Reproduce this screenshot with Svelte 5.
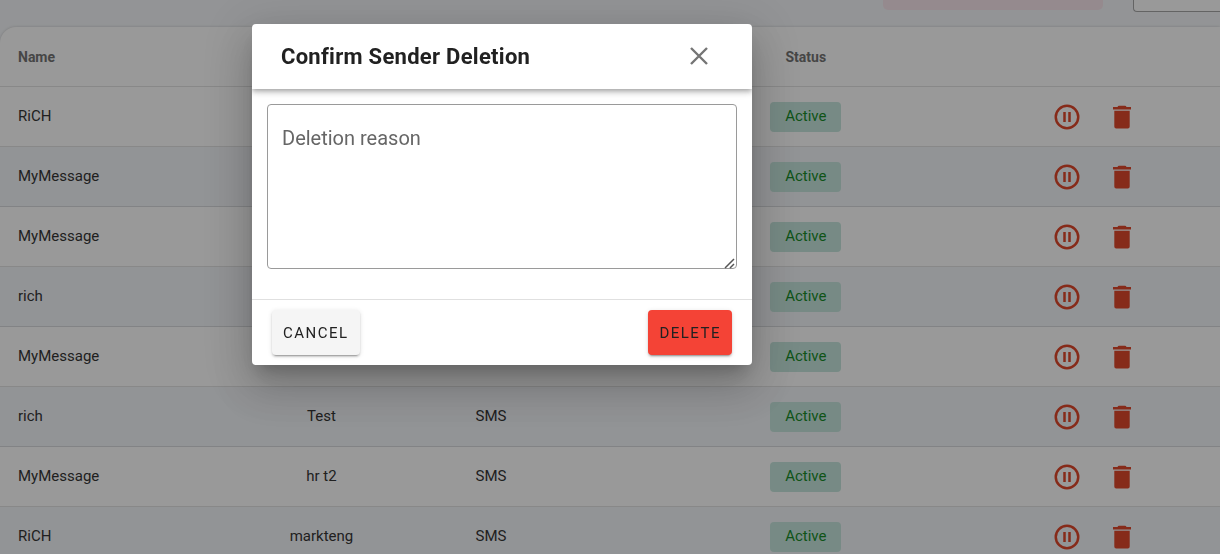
<script lang="ts">
  type Sender = { name: string; customer?: string; type?: string; status: string };

  let senders: Sender[] = [
    { name: 'RiCH', status: 'Active' },
    { name: 'MyMessage', status: 'Active' },
    { name: 'MyMessage', status: 'Active' },
    { name: 'rich', status: 'Active' },
    { name: 'MyMessage', status: 'Active' },
    { name: 'rich', customer: 'Test', type: 'SMS', status: 'Active' },
    { name: 'MyMessage', customer: 'hr t2', type: 'SMS', status: 'Active' },
    { name: 'RiCH', customer: 'markteng', type: 'SMS', status: 'Active' },
  ];

  let dialogOpen = true;
  let reason = '';

  function closeDialog() {
    dialogOpen = false;
    reason = '';
  }
</script>

<div class="page">
  <!-- Toolbar -->
  <div class="toolbar">
    <div class="notice"></div>
    <div class="filter"></div>
  </div>

  <!-- Senders table -->
  <div class="card">
    <table>
      <colgroup>
        <col class="col-name" />
        <col class="col-text" />
        <col class="col-text" />
        <col class="col-gap" />
        <col class="col-status" />
        <col class="col-actions" />
      </colgroup>
      <thead>
        <tr>
          <th class="name">Name</th>
          <th></th>
          <th></th>
          <th></th>
          <th>Status</th>
          <th></th>
        </tr>
      </thead>
      <tbody>
        {#each senders as sender}
          <tr>
            <td class="name text">{sender.name}</td>
            <td class="text">{sender.customer ?? ''}</td>
            <td class="text">{sender.type ?? ''}</td>
            <td></td>
            <td><span class="badge">{sender.status}</span></td>
            <td>
              <div class="actions">
                <button class="icon-button" aria-label="Pause sender">
                  <svg viewBox="0 0 24 24" width="30" height="30">
                    <path d="M13 16V8h2v8h-2m-4 0V8h2v8H9m3-14a10 10 0 0 1 10 10 10 10 0 0 1-10 10A10 10 0 0 1 2 12 10 10 0 0 1 12 2m0 2a8 8 0 0 0-8 8 8 8 0 0 0 8 8 8 8 0 0 0 8-8 8 8 0 0 0-8-8z" />
                  </svg>
                </button>
                <button class="icon-button" aria-label="Delete sender" on:click={() => (dialogOpen = true)}>
                  <svg viewBox="0 0 30 30" width="30" height="30">
                    <path d="M6 5h4.500q.5-1.300 1.500-1.300h6q1 0 1.500 1.300H24v2.500H6zM7.300 8.800h15.400v15.800q0 1.900-1.900 1.900H9.200q-1.900 0-1.900-1.900z" />
                  </svg>
                </button>
              </div>
            </td>
          </tr>
        {/each}
      </tbody>
    </table>
  </div>
</div>

{#if dialogOpen}
  <div class="overlay">
    <div class="dialog" role="dialog" aria-modal="true" aria-labelledby="dialog-title">
      <header>
        <h2 id="dialog-title">Confirm Sender Deletion</h2>
        <button class="icon-button close" aria-label="Close" on:click={closeDialog}>
          <svg viewBox="0 0 30 30" width="30" height="30">
            <path d="M7 6l16 16M23 6L7 22" />
          </svg>
        </button>
      </header>

      <div class="content">
        <div class="field">
          <textarea bind:value={reason} placeholder="Deletion reason" aria-label="Deletion reason"></textarea>
          <svg class="grip" viewBox="0 0 12 12" width="12" height="12" aria-hidden="true">
            <path d="M1 11L10 2M6 11L10 7" />
          </svg>
        </div>
      </div>

      <footer>
        <button class="btn cancel" on:click={closeDialog}>CANCEL</button>
        <button class="btn delete" on:click={closeDialog}>DELETE</button>
      </footer>
    </div>
  </div>
{/if}

<style>
  :global(body) {
    margin: 0;
    font-family: Roboto, 'Liberation Sans', sans-serif;
    color: #212121;
  }

  .page {
    height: 100vh;
    overflow: hidden;
    background: #f4f6f9;
  }

  /* Toolbar */
  .toolbar {
    display: flex;
    justify-content: flex-end;
    align-items: flex-start;
    gap: 30px;
    height: 27px;
  }

  .notice {
    width: 220px;
    height: 10px;
    border-radius: 0 0 5px 5px;
    background: #f8e4ea;
  }

  .filter {
    box-sizing: border-box;
    width: 87px;
    height: 12px;
    border: 1px solid #9e9e9e;
    border-width: 0 0 1px 1px;
    border-bottom-left-radius: 4px;
    background: #fff;
  }

  /* Table */
  .card {
    border-top-left-radius: 16px;
    background: #fff;
    box-shadow: 0 0 3px rgba(0, 0, 0, 0.2);
    overflow: hidden;
  }

  table {
    width: 100%;
    table-layout: fixed;
    border-collapse: separate;
    border-spacing: 0;
  }

  .col-name {
    width: 19.4%;
  }

  .col-text {
    width: 13.9%;
  }

  .col-gap {
    width: 5.5%;
  }

  .col-status {
    width: 26.7%;
  }

  .col-actions {
    width: 20.6%;
  }

  th,
  td {
    box-sizing: border-box;
    height: 60px;
    padding: 0;
    border-bottom: 1px solid rgba(0, 0, 0, 0.12);
    text-align: center;
  }

  th {
    color: #666;
    font-size: 14px;
    font-weight: 700;
  }

  td {
    font-size: 15px;
  }

  .text {
    padding-bottom: 2px;
  }

  .name {
    padding-left: 18px;
    text-align: left;
  }

  tbody tr:nth-child(even) {
    background: #f3f5f9;
  }

  .badge {
    display: inline-block;
    box-sizing: border-box;
    height: 30px;
    padding: 0 15px;
    border-radius: 4px;
    background: #c0e4da;
    color: #008010;
    line-height: 28px;
    vertical-align: middle;
  }

  .actions {
    display: flex;
    justify-content: center;
    gap: 25px;
  }

  .icon-button {
    display: flex;
    padding: 0;
    border: none;
    background: none;
    cursor: pointer;
  }

  .icon-button svg {
    fill: #dd3515;
  }

  /* Dialog */
  .overlay {
    position: fixed;
    inset: 0;
    box-sizing: border-box;
    padding: 24px 24px 24px 252px;
    background: rgba(33, 33, 33, 0.46);
  }

  .dialog {
    max-width: 500px;
    border-radius: 4px;
    background: #fff;
    box-shadow:
      0 11px 15px -7px rgba(0, 0, 0, 0.2),
      0 24px 38px 3px rgba(0, 0, 0, 0.14),
      0 9px 46px 8px rgba(0, 0, 0, 0.12);
    overflow: hidden;
  }

  header {
    display: flex;
    align-items: center;
    justify-content: space-between;
    height: 65px;
    padding: 0 38px 0 29px;
    box-shadow:
      0 2px 4px -1px rgba(0, 0, 0, 0.2),
      0 4px 5px 0 rgba(0, 0, 0, 0.14),
      0 1px 10px 0 rgba(0, 0, 0, 0.12);
  }

  h2 {
    margin: 0;
    font-size: 22px;
    font-weight: 700;
    letter-spacing: 0.0125em;
  }

  .close svg {
    fill: none;
    stroke: #757575;
    stroke-width: 2.4;
  }

  .content {
    padding: 15px 15px 30px;
  }

  .field {
    position: relative;
  }

  textarea {
    display: block;
    box-sizing: border-box;
    width: 100%;
    height: 165px;
    padding: 19px 14px;
    border: 1px solid #9a9a9a;
    border-radius: 4px;
    outline: none;
    font-family: inherit;
    font-size: 20px;
    line-height: 28px;
    resize: vertical;
  }

  textarea::placeholder {
    color: #666;
  }

  textarea::-webkit-resizer {
    background: transparent;
  }

  .grip {
    position: absolute;
    right: 1px;
    bottom: 0;
    fill: none;
    stroke: #555;
    stroke-width: 1.5;
    pointer-events: none;
  }

  footer {
    display: flex;
    justify-content: space-between;
    padding: 10px 20px;
    border-top: 1px solid #e0e0e0;
  }

  .btn {
    height: 45px;
    padding: 0 11px;
    border: none;
    border-radius: 4px;
    color: #212121;
    font-family: inherit;
    font-size: 15px;
    letter-spacing: 0.1em;
    box-shadow:
      0 3px 1px -2px rgba(0, 0, 0, 0.2),
      0 2px 2px 0 rgba(0, 0, 0, 0.14),
      0 1px 5px 0 rgba(0, 0, 0, 0.12);
    cursor: pointer;
  }

  .cancel {
    background: #f5f5f5;
  }

  .delete {
    background: #f44336;
  }
</style>
